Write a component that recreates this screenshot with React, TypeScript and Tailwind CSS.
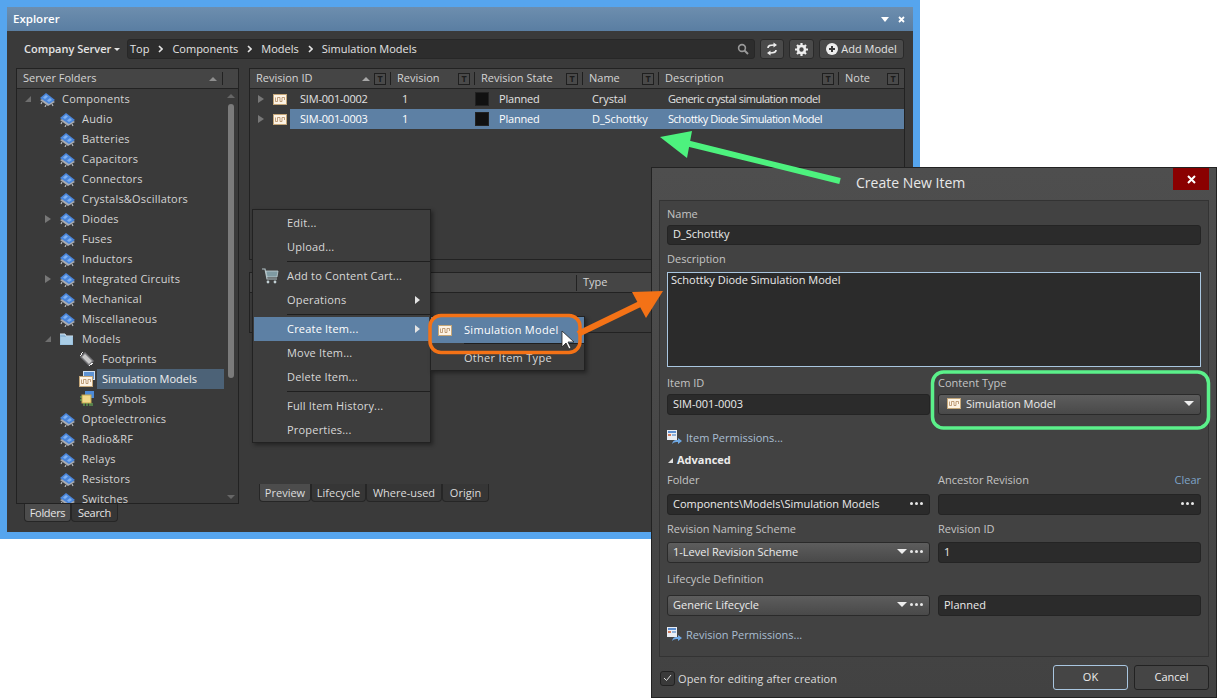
const font = "font-['Open_Sans','Noto_Sans',sans-serif]";

const folders = [
  { name: "Components", depth: 0, open: true },
  { name: "Audio", depth: 1 },
  { name: "Batteries", depth: 1 },
  { name: "Capacitors", depth: 1 },
  { name: "Connectors", depth: 1 },
  { name: "Crystals&Oscillators", depth: 1 },
  { name: "Diodes", depth: 1, closed: true },
  { name: "Fuses", depth: 1 },
  { name: "Inductors", depth: 1 },
  { name: "Integrated Circuits", depth: 1, closed: true },
  { name: "Mechanical", depth: 1 },
  { name: "Miscellaneous", depth: 1 },
  { name: "Models", depth: 1, open: true, icon: "folder" },
  { name: "Footprints", depth: 2, icon: "footprint" },
  { name: "Simulation Models", depth: 2, icon: "sim", selected: true },
  { name: "Symbols", depth: 2, icon: "symbol" },
  { name: "Optoelectronics", depth: 1 },
  { name: "Radio&RF", depth: 1 },
  { name: "Relays", depth: 1 },
  { name: "Resistors", depth: 1 },
  { name: "Switches", depth: 1 },
];

const ChipIcon = () => (
  <svg width="17" height="15" viewBox="0 0 17 15" className="shrink-0">
    <path d="M1 8 L9 14 L16 10 L8 5 Z" fill="#a9acb2" />
    <path d="M3 10 L2 12 M7 13 L6 15 M13 12 L14 14" stroke="#b4b7bc" strokeWidth="1.2" />
    <path d="M1 6 L7 1 L16 8 L10 12 Z" fill="#4a86dc" />
    <path d="M4 5.5 L7 3 L9 4.5 L6 7 Z M8 8.5 L11 6 L13 8 L10 10 Z" fill="#7fb0ee" />
  </svg>
);

const WaveIcon = ({ className = "" }: { className?: string }) => (
  <svg width="14" height="11" viewBox="0 0 14 11" className={`shrink-0 ${className}`}>
    <rect x="0" y="0" width="14" height="11" fill="#fdf3e4" />
    <rect x="0.5" y="0.5" width="13" height="10" fill="none" stroke="#c4a678" />
    <path d="M2.5 3.5 V7.5 H4.5 V3.5 H7 V7.5 H9 V3.5 H11.5 V6" fill="none" stroke="#a87c50" strokeWidth="0.7" />
  </svg>
);

const TreeIcon = ({ kind }: { kind?: string }) => {
  if (kind === "folder")
    return (
      <svg width="15" height="13" viewBox="0 0 15 13" className="shrink-0">
        <path d="M1 1 H6 L7 3 H14 V12 H1 Z" fill="#8fb8d8" />
        <rect x="1.5" y="4" width="12" height="7.5" fill="#a9cde6" />
        <path d="M1 1 H6 L7 3 H14" fill="none" stroke="#d5e6f2" />
      </svg>
    );
  if (kind === "footprint")
    return (
      <svg width="16" height="16" viewBox="0 0 16 16" className="shrink-0">
        <path d="M1 6 L6 1 L15 10 L10 15 Z" fill="#76767a" />
        <path d="M3 6 L6 3 L13 10 L10 13 Z" fill="#c9c9c9" />
        <path d="M2 3 L4 1 M12 14 L14 12 M1 5 L3 3 M10 15 L13 12" stroke="#eeeeee" />
      </svg>
    );
  if (kind === "sim")
    return (
      <div className="relative w-[16px] h-[16px] shrink-0">
        <div className="absolute right-0 top-0 w-[12px] h-[9px] bg-[#5d92d2] border border-[#cfe0f2]" />
        <WaveIcon className="absolute left-0 bottom-0" />
      </div>
    );
  if (kind === "symbol")
    return (
      <svg width="16" height="16" viewBox="0 0 16 16" className="shrink-0">
        <rect x="6" y="0" width="9" height="7" fill="#4d8ad6" />
        <rect x="3" y="4" width="9" height="8" fill="#f1d98a" stroke="#c4a64e" />
        <path d="M1 6 H3 M1 9 H3 M5 12 V15 M8 12 V15 M11 12 V15 M13 12 V15" stroke="#6fc25a" />
      </svg>
    );
  return <ChipIcon />;
};

const Chevron = () => (
  <svg width="5" height="8" viewBox="0 0 5 8" className="mx-[9px] shrink-0">
    <path d="M1 1 L4 4 L1 7" fill="none" stroke="#e4e4e4" strokeWidth="1.6" />
  </svg>
);

const TBox = () => (
  <span className="w-[12px] h-[12px] border border-[#1f1f1f] bg-[#4a4a4a] text-[9px] leading-[10px] font-bold text-[#1c1c1c] text-center shrink-0">
    T
  </span>
);

const Column = ({ label, width, sort }: { label: string; width: string; sort?: boolean }) => (
  <div className={`flex items-center ${width} pl-[6px] pr-[4px] border-r border-[#1f1f1f] h-[13px] shrink-0`}>
    <span className="flex-1 whitespace-nowrap pb-[2px]">{label}</span>
    {sort && <span className="w-0 h-0 mr-[4px] border-x-[4px] border-x-transparent border-b-[4px] border-b-[#a8a8a8]" />}
    <TBox />
  </div>
);

const Row = ({ id, name, desc, selected }: { id: string; name: string; desc: string; selected?: boolean }) => (
  <div className="flex items-center h-[20px] text-[#e2e2e2] tracking-[-0.2px]">
    <span className="w-0 h-0 ml-[8px] border-y-[4px] border-y-transparent border-l-[6px] border-l-[#777]" />
    <WaveIcon className="ml-[9px]" />
    <div className={`flex items-center h-full flex-1 ml-[3px] ${selected ? "bg-[#5d80a4] text-white" : ""}`}>
      <span className="w-[112px] pl-[10px]">{id}</span>
      <span className="w-[73px]">1</span>
      <span className="w-[14px] h-[14px] bg-[#111111] border border-[#222]" />
      <span className="w-[103px] pl-[10px]">Planned</span>
      <span className="w-[76px] tracking-[-0.1px]">{name}</span>
      <span className="tracking-[-0.5px]">{desc}</span>
    </div>
  </div>
);

const Dots = () => (
  <span className="flex gap-[2px] shrink-0">
    <i className="w-[3px] h-[3px] rounded-full bg-[#e8e8e8]" />
    <i className="w-[3px] h-[3px] rounded-full bg-[#e8e8e8]" />
    <i className="w-[3px] h-[3px] rounded-full bg-[#e8e8e8]" />
  </span>
);

const Caret = () => <span className="w-0 h-0 border-x-[5px] border-x-transparent border-t-[5px] border-t-[#eeeeee] shrink-0" />;

const Field = ({ children, className = "" }: { children?: React.ReactNode; className?: string }) => (
  <div className={`flex items-center pl-[5px] pr-[6px] pb-[2px] bg-[#2b2b2b] border border-[#242424] rounded-[3px] text-[#ececec] ${className}`}>
    {children}
  </div>
);

const Select = ({ children, className = "" }: { children: React.ReactNode; className?: string }) => (
  <div className={`flex items-center pl-[5px] pr-[6px] pb-[2px] bg-gradient-to-b from-[#5d5d5d] to-[#494949] border border-[#2a2a2a] rounded-[3px] text-[#ececec] ${className}`}>
    {children}
  </div>
);

const Label = ({ children, className = "" }: { children: React.ReactNode; className?: string }) => (
  <div className={`text-[#c4c4c4] leading-[14px] ${className}`}>{children}</div>
);

const PermIcon = () => (
  <svg width="16" height="16" viewBox="0 0 16 16" className="shrink-0">
    <rect x="0" y="0" width="10" height="10" fill="#e9edf3" />
    <rect x="1" y="1" width="8" height="2" fill="#5d8fd0" />
    <rect x="1" y="4" width="3" height="2" fill="#d07a5c" />
    <rect x="5" y="4" width="4" height="2" fill="#8fb0d8" />
    <path d="M5 14 C6 10 8 10 11 10 V8 L15 11 L11 14 V12 C9 12 7 12 5 14 Z" fill="#6fa8e4" />
  </svg>
);

const MenuItem = ({ label, cart, arrow, active }: { label: string; cart?: boolean; arrow?: boolean; active?: boolean }) => (
  <div className={`flex items-center h-[24px] mx-px tracking-[0.2px] ${active ? "bg-[#5d80a4] text-white" : ""}`}>
    <span className="w-[33px] flex justify-center">
      {cart && (
        <svg width="17" height="16" viewBox="0 0 17 16">
          <path d="M0 1 H3 L5 11 H15" fill="none" stroke="#b4c4c8" strokeWidth="1.2" />
          <path d="M4 3 H16 L15 9 H5 Z" fill="#7f9aa2" stroke="#c2d0d4" strokeWidth="0.8" />
          <circle cx="6" cy="14" r="1.4" fill="#c2d0d4" />
          <circle cx="13" cy="14" r="1.4" fill="#c2d0d4" />
        </svg>
      )}
    </span>
    <span className="flex-1">{label}</span>
    {arrow && <span className="w-0 h-0 mr-[9px] border-y-[4px] border-y-transparent border-l-[5px] border-l-[#e4e4e4]" />}
  </div>
);

const MenuLine = () => (
  <div className="h-[5px] flex items-center pl-[34px]">
    <div className="w-full h-px bg-[#1f1f1f]" />
  </div>
);

export default function App() {
  return (
    <div className={`relative w-[1217px] h-[698px] overflow-hidden bg-white text-[11px] leading-[14px] ${font}`}>
      {/* explorer window */}
      <div className="absolute left-0 top-0 w-[920px] h-[539px] bg-[#56a5ee] p-[7px] pr-[7px]">
        <div className="flex flex-col h-full bg-[#3a3a3a] text-[#d4d4d4]">
          <div className="flex items-center h-[24px] pl-[6px] pr-[8px] bg-gradient-to-b from-[#6d8eae] to-[#5a7ea2] text-white font-semibold">
            <span className="flex-1 text-[11.5px]">Explorer</span>
            <span className="w-0 h-0 mr-[9px] border-x-[4px] border-x-transparent border-t-[5px] border-t-white" />
            <svg width="7" height="7" viewBox="0 0 7 7"><path d="M1 1 L6 6 M6 1 L1 6" stroke="white" strokeWidth="1.8" /></svg>
          </div>

          <div className="flex items-center h-[20px] mt-[8px] pl-[17px] pr-[9px]">
            <span className="w-[103px] shrink-0 flex items-center font-semibold text-[#e4e4e4] whitespace-nowrap">
              Company Server
              <span className="w-0 h-0 ml-[3px] border-x-[3px] border-x-transparent border-t-[3px] border-t-[#e4e4e4]" />
            </span>
            <div className="flex items-center flex-1 h-full pl-[2px] pr-[5px] bg-[#2d2d2d] border border-[#272727] rounded-[3px] text-[#e4e4e4]">
              <span>Top</span><Chevron />
              <span>Components</span><Chevron />
              <span>Models</span><Chevron />
              <span className="flex-1">Simulation Models</span>
              <svg width="12" height="12" viewBox="0 0 12 12">
                <circle cx="5" cy="5" r="3.4" fill="none" stroke="#999" strokeWidth="1.6" />
                <path d="M7.5 7.5 L11 11" stroke="#999" strokeWidth="2" />
              </svg>
            </div>
            <button className="flex items-center justify-center w-[24px] h-full ml-[5px] bg-[#4a4a4a] border border-[#2a2a2a] rounded-[3px]">
              <svg width="12" height="14" viewBox="0 0 12 14" fill="none" stroke="#eee" strokeWidth="1.7">
                <path d="M2 6 C2 3.5 4 3 8 3" />
                <path d="M7.5 0.5 L11 3 L7.5 5.5 Z" fill="#eee" stroke="none" />
                <path d="M10 8 C10 10.5 8 11 4 11" />
                <path d="M4.5 8.5 L1 11 L4.5 13.5 Z" fill="#eee" stroke="none" />
              </svg>
            </button>
            <button className="flex items-center justify-center w-[25px] h-full ml-[5px] bg-[#4a4a4a] border border-[#2a2a2a] rounded-[3px]">
              <svg width="13" height="13" viewBox="0 0 13 13">
                <circle cx="6.5" cy="6.5" r="3.5" fill="none" stroke="#eee" strokeWidth="2.6" />
                <path d="M6.5 0 V3 M6.5 10 V13 M0 6.5 H3 M10 6.5 H13 M2 2 L4 4 M9 9 L11 11 M11 2 L9 4 M4 9 L2 11" stroke="#eee" strokeWidth="2.2" />
              </svg>
            </button>
            <button className="flex items-center justify-center gap-[3px] w-[85px] h-full ml-[5px] bg-[#4a4a4a] border border-[#2a2a2a] rounded-[3px] text-[#e4e4e4]">
              <svg width="12" height="12" viewBox="0 0 12 12">
                <circle cx="6" cy="6" r="6" fill="#eee" />
                <path d="M6 3 V9 M3 6 H9" stroke="#3a3a3a" strokeWidth="2" />
              </svg>
              Add Model
            </button>
          </div>

          <div className="flex flex-1 mt-[9px] pl-[9px] pr-[8px] min-h-0">
            {/* folder tree */}
            <div className="flex flex-col w-[223px] shrink-0">
              <div className="flex flex-col h-[436px] border border-[#222] overflow-hidden">
                <div className="flex items-center h-[20px] shrink-0 pl-[6px] bg-[#454545] border-b border-[#222]">
                  <span className="flex-1 pb-[2px]">Server Folders</span>
                  <span className="w-0 h-0 mr-[5px] border-x-[4px] border-x-transparent border-b-[4px] border-b-[#8e8e8e]" />
                  <span className="w-px h-[13px] bg-[#222] mr-[15px]" />
                </div>
                <div className="flex flex-1 min-h-0">
                  <div className="flex-1 min-w-0">
                    {folders.map((f) => (
                      <div key={f.name} className="flex items-center h-[20px]" style={{ paddingLeft: f.depth * 20 + 8 }}>
                        <span className="w-[14px] flex shrink-0">
                          {f.open && <span className="w-0 h-0 border-b-[6px] border-b-[#6e6e6e] border-l-[6px] border-l-transparent" />}
                          {f.closed && <span className="w-0 h-0 border-y-[4px] border-y-transparent border-l-[6px] border-l-[#777]" />}
                        </span>
                        <span className="w-[17px] flex shrink-0"><TreeIcon kind={f.icon} /></span>
                        <span className={`h-[20px] flex items-center whitespace-nowrap ${f.selected ? "ml-[1px] pl-[5px] w-[127px] bg-[#4c6277] text-[#f0f0f0]" : "ml-[3px] pl-[3px] tracking-[0.2px]"}`}>{f.name}</span>
                      </div>
                    ))}
                  </div>
                  <div className="relative w-[14px] flex flex-col items-center">
                    <span className="w-0 h-0 mt-[5px] border-x-[4px] border-x-transparent border-b-[4px] border-b-[#666]" />
                    <span className="w-[6px] h-[274px] mt-[6px] rounded-[3px] bg-[#7b7b7b]" />
                    <span className="absolute bottom-[4px] w-0 h-0 border-x-[4px] border-x-transparent border-t-[4px] border-t-[#666]" />
                  </div>
                </div>
              </div>
              <div className="flex ml-[8px] text-[#e6e6e6] tracking-[-0.3px]">
                <span className="w-[47px] h-[18px] pt-px flex items-center justify-center bg-[#4c4c4c] border border-t-0 border-[#262626] rounded-b-[4px]">Folders</span>
                <span className="w-[47px] h-[18px] pt-px flex items-center justify-center bg-[#363636] border border-t-0 border-[#262626] rounded-b-[4px]">Search</span>
              </div>
            </div>

            {/* revision list */}
            <div className="flex flex-col flex-1 ml-[10px] min-w-0">
              <div className="h-[192px] border border-[#222] shrink-0">
                <div className="flex items-center h-[20px] bg-[#454545] border-b border-[#222]">
                  <Column label="Revision ID" width="w-[141px]" sort />
                  <Column label="Revision" width="w-[84px]" />
                  <Column label="Revision State" width="w-[108px]" />
                  <Column label="Name" width="w-[76px]" />
                  <Column label="Description" width="w-[180px]" />
                  <div className="flex items-center flex-1 pl-[6px] pr-[5px]">
                    <span className="flex-1 pb-[2px]">Note</span>
                    <TBox />
                  </div>
                </div>
                <Row id="SIM-001-0002" name="Crystal" desc="Generic crystal simulation model" />
                <Row id="SIM-001-0003" name="D_Schottky" desc="Schottky Diode Simulation Model" selected />
              </div>
              <div className="h-[208px] mt-[12px] shrink-0">
                <div className="h-[61px] border border-b-0 border-[#222]">
                  <div className="flex items-center h-[20px] bg-[#454545] border-b border-[#222]">
                    <div className="w-[326px]" />
                    <span className="pl-[6px] pb-[2px] border-l border-[#222]">Type</span>
                  </div>
                  <div className="h-[40px] border-b border-[#222]" />
                </div>
              </div>
              <div className="flex ml-[10px] mt-[4px] text-[#dcdcdc]">
                <span className="w-[52px] h-[18px] flex items-center justify-center bg-[#4c4c4c] border border-t-0 border-[#262626] rounded-b-[4px]">Preview</span>
                <span className="w-[55px] h-[18px] flex items-center justify-center bg-[#363636] border border-t-0 border-[#262626] rounded-b-[4px]">Lifecycle</span>
                <span className="w-[76px] h-[18px] flex items-center justify-center bg-[#363636] border border-t-0 border-[#262626] rounded-b-[4px]">Where-used</span>
                <span className="w-[47px] h-[18px] flex items-center justify-center bg-[#363636] border border-t-0 border-[#262626] rounded-b-[4px]">Origin</span>
              </div>
            </div>
          </div>
        </div>
      </div>

      {/* context menu */}
      <div className="absolute left-[252px] top-[209px] w-[179px] h-[234px] py-[1px] bg-[#3d3d3d] border border-[#222] text-[#d8d8d8] shadow-[2px_2px_4px_rgba(0,0,0,0.4)]">
        <MenuItem label="Edit..." />
        <MenuItem label="Upload..." />
        <MenuLine />
        <MenuItem label="Add to Content Cart..." cart />
        <MenuItem label="Operations" arrow />
        <MenuLine />
        <MenuItem label="Create Item..." arrow active />
        <MenuItem label="Move Item..." />
        <MenuItem label="Delete Item..." />
        <MenuLine />
        <MenuItem label="Full Item History..." />
        <MenuItem label="Properties..." />
      </div>

      {/* submenu */}
      <div className="absolute left-[430px] top-[316px] w-[155px] h-[55px] bg-[#3d3d3d] border border-[#222] text-[#d8d8d8] tracking-[0.3px] shadow-[2px_2px_4px_rgba(0,0,0,0.4)]">
        <div className="flex items-center h-[26px] bg-[#5d80a4] text-white pl-[7px]">
          <WaveIcon />
          <span className="ml-[12px]">Simulation Model</span>
        </div>
        <div className="h-px ml-[33px] bg-[#1f1f1f]" />
        <div className="h-[27px] flex items-center pl-[33px]">Other Item Type</div>
      </div>

      {/* dialog */}
      <div className="absolute left-[651px] top-[167px] w-[566px] h-[531px] flex flex-col bg-gradient-to-b from-[#4e4e4e] to-[#424242] border border-[#222] text-[#ececec]">
        <div className="relative h-[32px] shrink-0 text-[14px] leading-[30px] pl-[204px] text-[#e8e8e8]">
          Create New Item
          <div className="absolute right-[7px] top-0 w-[36px] h-[22px] flex items-center justify-center bg-[#8a0000]">
            <svg width="9" height="9" viewBox="0 0 9 9"><path d="M1 1 L8 8 M8 1 L1 8" stroke="white" strokeWidth="2" /></svg>
          </div>
        </div>
        <div className="h-[457px] mx-[7px] px-[7px] pt-[6px] border border-[#333] bg-[#424242] shrink-0">
          <Label>Name</Label>
          <Field className="h-[20px] mt-[4px] !pb-[3px]">D_Schottky</Field>
          <Label className="mt-[7px]">Description</Label>
          <div className="h-[95px] mt-[6px] px-[3px] bg-[#2b2b2b] border border-[#a9c6e0] text-[#ececec]">Schottky Diode Simulation Model</div>
          <div className="grid grid-cols-2 gap-x-[8px] mt-[9px]">
            <div>
              <Label>Item ID</Label>
              <Field className="h-[21px] mt-[4px]">SIM-001-0003</Field>
            </div>
            <div>
              <Label>Content Type</Label>
              <Select className="h-[21px] mt-[4px]">
                <WaveIcon className="ml-[3px]" />
                <span className="flex-1 ml-[5px]">Simulation Model</span>
                <Caret />
              </Select>
            </div>
          </div>
          <div className="flex items-center h-[16px] mt-[15px] text-[#a9bed2]">
            <PermIcon />
            <span className="ml-[3px]">Item Permissions...</span>
          </div>
          <div className="flex items-center h-[14px] mt-[7px] font-bold text-[#ececec]">
            <span className="w-0 h-0 ml-[1px] mr-[4px] border-b-[5px] border-b-[#e0e0e0] border-l-[5px] border-l-transparent" />
            Advanced
          </div>
          <div className="grid grid-cols-2 gap-x-[8px] mt-[6px]">
            <div>
              <Label>Folder</Label>
              <Field className="h-[21px] mt-[7px] justify-between">
                Components\Models\Simulation Models
                <Dots />
              </Field>
            </div>
            <div>
              <Label className="flex justify-between">
                Ancestor Revision
                <span className="text-[#7ea4c8]">Clear</span>
              </Label>
              <Field className="h-[21px] mt-[7px] justify-end"><Dots /></Field>
            </div>
            <div className="mt-[7px]">
              <Label>Revision Naming Scheme</Label>
              <Select className="h-[21px] mt-[6px]">
                <span className="flex-1">1-Level Revision Scheme</span>
                <Caret />
                <span className="ml-[3px]"><Dots /></span>
              </Select>
            </div>
            <div className="mt-[7px]">
              <Label>Revision ID</Label>
              <Field className="h-[21px] mt-[6px]">1</Field>
            </div>
            <div className="mt-[9px]">
              <Label>Lifecycle Definition</Label>
              <Select className="h-[21px] mt-[9px]">
                <span className="flex-1">Generic Lifecycle</span>
                <Caret />
                <span className="ml-[3px]"><Dots /></span>
              </Select>
            </div>
            <div className="mt-[32px]">
              <Field className="h-[21px]">Planned</Field>
            </div>
          </div>
          <div className="flex items-center h-[16px] mt-[11px] text-[#a9bed2]">
            <PermIcon />
            <span className="ml-[3px]">Revision Permissions...</span>
          </div>
        </div>
        <div className="flex items-center flex-1 pl-[8px] pr-[7px]">
          <span className="w-[15px] h-[15px] mt-[2px] flex items-center justify-center bg-[#3a3a3a] border border-[#222] rounded-[3px]">
            <svg width="9" height="8" viewBox="0 0 9 8"><path d="M1 4 L3.5 6.5 L8 1" fill="none" stroke="#dcdcdc" strokeWidth="1" /></svg>
          </span>
          <span className="ml-[3px] pt-[3px] flex-1 text-[#dcdcdc] tracking-[0.1px]">Open for editing after creation</span>
          <button className="w-[75px] h-[25px] bg-[#454545] border border-[#a9c6e0] rounded-[3px]">OK</button>
          <button className="w-[75px] h-[25px] ml-[6px] bg-[#454545] border border-[#222] rounded-[3px]">Cancel</button>
        </div>
      </div>

      {/* annotations */}
      <svg className="absolute inset-0 pointer-events-none" width="1217" height="698" viewBox="0 0 1217 698">
        <path d="M686 143 L840 181" stroke="#4df27e" strokeWidth="6" />
        <path d="M660 137 L692 131 L687 158 Z" fill="#4df27e" />
        <path d="M578 334 L640 304" stroke="#f47216" strokeWidth="6" />
        <path d="M663 291 L632 292 L646 318 Z" fill="#f47216" />
        <rect x="430" y="315.5" width="150" height="37" rx="11" fill="none" stroke="#f47216" strokeWidth="3.5" />
        <rect x="932.5" y="372" width="276" height="56" rx="11" fill="none" stroke="#5bf08a" strokeWidth="3.5" />
        <path d="M562 331 V347 L566 343 L569 349 L571 348 L568 342 L574 342 Z" fill="white" stroke="#222" strokeWidth="0.8" />
      </svg>
    </div>
  );
}
